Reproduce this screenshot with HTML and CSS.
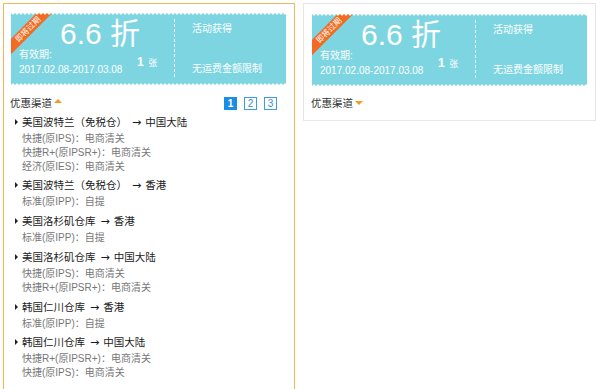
FILE: index.html
```html
<!DOCTYPE html>
<html lang="zh-CN">
<head>
<meta charset="utf-8">
<title>优惠券</title>
<link rel="stylesheet" href="styles.css">
</head>
<body>
<div class="page">
  <div class="card card-active">
    <div class="ticket">
      <div class="ribbon-clip"><span class="ribbon">即将过期</span></div>
      <div class="t-left">
        <div class="amount">6.6 折</div>
        <div class="t-info">
          <div class="validity"><div>有效期:</div><div>2017.02.08-2017.03.08</div></div>
          <div class="count"><b>1</b> 张</div>
        </div>
      </div>
      <div class="divider"></div>
      <div class="t-right"><div>活动获得</div><div>无运费金额限制</div></div>
    </div>
    <div class="channel-bar">
      <span class="channel-title">优惠渠道<i class="caret caret-up"></i></span>
      <div class="pager"><span class="pg pg-on">1</span><span class="pg">2</span><span class="pg">3</span></div>
    </div>
    <ul class="routes">
      <li class="route">
        <div class="route-name">美国波特兰（免税仓）<span class="arrow">→</span>中国大陆</div>
        <div class="svc">快捷(原IPS)：电商清关</div>
        <div class="svc">快捷R+(原IPSR+)：电商清关</div>
        <div class="svc">经济(原IES)：电商清关</div>
      </li>
      <li class="route">
        <div class="route-name">美国波特兰（免税仓）<span class="arrow">→</span>香港</div>
        <div class="svc">标准(原IPP)：自提</div>
      </li>
      <li class="route">
        <div class="route-name">美国洛杉矶仓库<span class="arrow">→</span>香港</div>
        <div class="svc">标准(原IPP)：自提</div>
      </li>
      <li class="route">
        <div class="route-name">美国洛杉矶仓库<span class="arrow">→</span>中国大陆</div>
        <div class="svc">快捷(原IPS)：电商清关</div>
        <div class="svc">快捷R+(原IPSR+)：电商清关</div>
      </li>
      <li class="route">
        <div class="route-name">韩国仁川仓库<span class="arrow">→</span>香港</div>
        <div class="svc">标准(原IPP)：自提</div>
      </li>
      <li class="route">
        <div class="route-name">韩国仁川仓库<span class="arrow">→</span>中国大陆</div>
        <div class="svc">快捷R+(原IPSR+)：电商清关</div>
        <div class="svc">快捷(原IPS)：电商清关</div>
      </li>
    </ul>
  </div>

  <div class="card card-plain">
    <div class="ticket">
      <div class="ribbon-clip"><span class="ribbon">即将过期</span></div>
      <div class="t-left">
        <div class="amount">6.6 折</div>
        <div class="t-info">
          <div class="validity"><div>有效期:</div><div>2017.02.08-2017.03.08</div></div>
          <div class="count"><b>1</b> 张</div>
        </div>
      </div>
      <div class="divider"></div>
      <div class="t-right"><div>活动获得</div><div>无运费金额限制</div></div>
    </div>
    <div class="channel-bar">
      <span class="channel-title">优惠渠道<i class="caret caret-down"></i></span>
    </div>
  </div>
</div>
</body>
</html>
```

FILE: styles.css
```css
* { box-sizing: border-box; }
html, body { margin: 0; padding: 0; background: #fff; }
body {
  font-family: "Liberation Sans", "Noto Sans CJK SC", sans-serif;
  color: #333;
}
.page {
  display: flex;
  align-items: flex-start;
  gap: 8px;
  padding: 3px;
}
.card {
  background: #fff;
}
.card-active {
  width: 292px;
  border: 1px solid #f6b656;
  padding: 9px 8px 9px 7px;
}
.card-plain {
  width: 293px;
  border: 1px solid #e6e6e6;
  padding: 10px 8px 10px 8px;
}
.ticket {
  position: relative;
  display: flex;
  height: 72px;
  width: 275px;
  background: #7dd5e1;
  color: #fff;
}
.ticket::before,
.ticket::after {
  content: "";
  position: absolute;
  left: 0;
  right: 0;
  height: 3px;
  background-size: 4px 3px;
  background-repeat: repeat-x;
  z-index: 2;
}
.ticket::before {
  top: 0;
  background-image: radial-gradient(circle at 2px 0, #fff 1.3px, rgba(255,255,255,0) 1.8px);
}
.ticket::after {
  bottom: 0;
  background-image: radial-gradient(circle at 2px 3px, #fff 1.3px, rgba(255,255,255,0) 1.8px);
}
.ribbon-clip {
  position: absolute;
  inset: 0;
  overflow: hidden;
  z-index: 1;
}
.ribbon {
  position: absolute;
  left: -18px;
  top: 11px;
  width: 70px;
  height: 11px;
  line-height: 11px;
  font-size: 8px;
  text-align: center;
  background: #f36a22;
  color: #fff;
  transform: rotate(-45deg);
}
.t-left {
  width: 163px;
  padding: 8px 0 0 8px;
}
.amount {
  font-size: 30px;
  line-height: 26px;
  margin-left: 41px;
  white-space: nowrap;
}
.t-info {
  display: flex;
  align-items: center;
}
.validity {
  width: 118px;
  font-size: 10px;
  line-height: 15px;
}
.count {
  font-size: 9px;
  line-height: 15px;
  padding-top: 1px;
}
.count b {
  font-size: 12px;
  font-weight: bold;
  margin-right: 2px;
}
.divider {
  width: 0;
  margin: 6px 0 8px;
  border-left: 1px dashed rgba(255,255,255,0.9);
}
.t-right {
  flex: 1;
  display: flex;
  flex-direction: column;
  justify-content: space-between;
  padding: 9px 0 9px 17px;
  font-size: 10px;
  line-height: 14px;
}
.channel-bar {
  display: flex;
  justify-content: space-between;
  align-items: center;
  height: 14px;
  margin-top: 11px;
  padding-right: 9px;
}
.card-plain .channel-bar { margin-top: 10px; }
.channel-title {
  font-size: 10.5px;
  line-height: 14px;
  color: #333;
  margin-left: -1px;
}
.caret {
  display: inline-block;
  width: 0;
  height: 0;
  border-left: 4px solid transparent;
  border-right: 4px solid transparent;
  margin-left: 2px;
  position: relative;
}
.caret-up {
  border-bottom: 4px solid #f39b1f;
  top: -4px;
}
.caret-down {
  border-top: 4px solid #f39b1f;
  top: -2px;
}
.pager {
  display: flex;
  gap: 7px;
}
.pg {
  width: 13px;
  height: 13px;
  border: 1px solid #3d9ae3;
  color: #2e8fdc;
  font-size: 10px;
  line-height: 11px;
  text-align: center;
  background: #fff;
}
.pg-on {
  background: #1b8de4;
  border-color: #1b8de4;
  color: #fff;
  font-weight: bold;
}
.routes {
  list-style: none;
  margin: 1px 0 0;
  padding: 0 0 0 4px;
}
.route {
  margin-top: 3px;
}
.route-name {
  position: relative;
  padding-left: 7px;
  font-size: 10.5px;
  line-height: 18px;
  color: #1a1a1a;
  white-space: nowrap;
}
.route-name::before {
  content: "";
  position: absolute;
  left: 0;
  top: 6px;
  border-left: 3px solid #222;
  border-top: 3px solid transparent;
  border-bottom: 3px solid transparent;
}
.arrow {
  display: inline-block;
  font-family: "DejaVu Sans", sans-serif;
  font-size: 11px;
  margin: 0 4px 0 5px;
}
.svc {
  padding-left: 7px;
  font-size: 10px;
  line-height: 13.8px;
  color: #777;
  white-space: nowrap;
}
```
